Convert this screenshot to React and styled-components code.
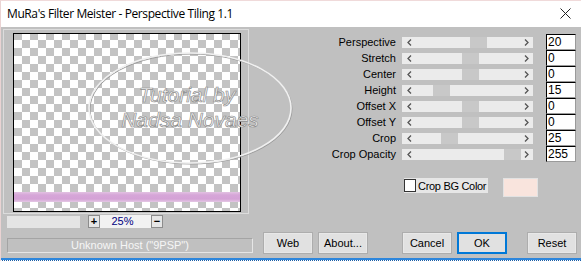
import React from 'react';
import styled, { createGlobalStyle } from 'styled-components';

const Global = createGlobalStyle`
  html, body { margin: 0; padding: 0; background: #c0c0c0; }
  body { font-family: "Liberation Sans", Arial, sans-serif; }
  * { box-sizing: border-box; }
`;

const Window = styled.div`
  width: 581px;
  height: 261px;
  display: flex;
  flex-direction: column;
  overflow: hidden;
  border-left: 1px solid #ead3d3;
  border-top: 1px solid #f0dada;
`;

const TitleBar = styled.div`
  height: 26px;
  flex: none;
  background: #ffffff;
  display: flex;
  align-items: center;
  padding-left: 6px;
  padding-right: 10px;
`;

const TitleText = styled.div`
  font-family: "Open Sans", "Noto Sans", sans-serif;
  font-size: 12px;
  color: #000;
  letter-spacing: -0.4px;
  margin-top: -1px;
`;

const CloseIcon = styled.svg`
  margin-left: auto;
  width: 11px;
  height: 11px;
  margin-top: -1px;
`;

const Body = styled.div`
  flex: 1;
  position: relative;
  background: #c0c0c0;
  display: flex;
  flex-direction: column;
`;

const TopRow = styled.div`
  display: flex;
  padding-top: 2px;
`;

const LeftCol = styled.div`
  margin-left: 2px;
  width: 246px;
  display: flex;
  flex-direction: column;
  flex: none;
`;

const Frame = styled.div`
  height: 185px;
  border: 1px solid #dcdcdc;
  padding: 3px 0 0 9px;
`;

const Preview = styled.div`
  position: relative;
  width: 228px;
  height: 179px;
  border: 1px solid #000;
  background-color: #ffffff;
  background-image:
    linear-gradient(45deg, #c3c3c3 25%, transparent 25%, transparent 75%, #c3c3c3 75%),
    linear-gradient(45deg, #c3c3c3 25%, transparent 25%, transparent 75%, #c3c3c3 75%);
  background-size: 16px 16px;
  background-position: 8px -2px, 0px 6px;
  overflow: hidden;
`;

const Band = styled.div`
  position: absolute;
  left: 0;
  right: 0;
  top: 158px;
  height: 10px;
  background: linear-gradient(#e2c2e2, #d6a6d8 30%, #d4a2d6 70%, #e4c8e4);
`;

const ZoomRow = styled.div`
  margin-top: 1px;
  height: 13px;
  display: flex;
  align-items: center;
  padding-left: 4px;
`;

const BlankBox = styled.div`
  width: 73px;
  height: 12px;
  background: #e4e4e4;
`;

const ZoomCtl = styled.div`
  margin-left: 8px;
  width: 75px;
  height: 13px;
  display: flex;
  align-items: center;
  background: #f2f2f2;
`;

const StepBtn = styled.div`
  width: 12px;
  height: 13px;
  border: 1px solid #8c8c8c;
  background: #e6e6e6;
  font-size: 11px;
  font-weight: bold;
  line-height: 10px;
  text-align: center;
  color: #000;
`;

const ZoomText = styled.div`
  flex: 1;
  text-align: center;
  font-size: 11px;
  color: #000080;
  line-height: 13px;
  padding-right: 6px;
`;

const RightCol = styled.div`
  flex: 1;
  padding-top: 5px;
  padding-right: 5px;
  display: flex;
  flex-direction: column;
  align-items: flex-end;
`;

const Params = styled.div`
  display: grid;
  grid-template-columns: auto 131px 37px;
  grid-auto-rows: 16px;
  column-gap: 6px;
  align-items: center;
`;

const Label = styled.div`
  text-align: right;
  font-size: 11px;
  color: #000;
  white-space: nowrap;
`;

const Track = styled.div`
  position: relative;
  height: 11px;
  background: #ebebeb;
  display: flex;
  align-items: center;
  justify-content: space-between;
  padding: 0 4px 0 5px;
`;

const Thumb = styled.div`
  position: absolute;
  top: 0;
  width: 17px;
  height: 11px;
  background: #c8c8c8;
`;

const Chevron = styled.svg`
  width: 5px;
  height: 7px;
  position: relative;
`;

const ValueBox = styled.div`
  margin-left: 7px;
  width: 30px;
  height: 16px;
  background: #fff;
  border-top: 1px solid #000;
  border-left: 1px solid #000;
  border-right: 1px solid #9a9a9a;
  border-bottom: 1px solid #9a9a9a;
  font-size: 12px;
  line-height: 14px;
  padding-left: 1px;
  color: #000;
`;

const CropRow = styled.div`
  width: 173px;
  margin-top: 16px;
  padding-left: 1px;
  display: flex;
  align-items: flex-start;
`;

const CheckLabel = styled.div`
  width: 84px;
  height: 15px;
  display: flex;
  align-items: center;
  background: #e6e6e6;
  white-space: nowrap;
  overflow: visible;
`;

const CheckBox = styled.div`
  flex: none;
  width: 12px;
  height: 13px;
  background: #fff;
  border: 1px solid #333;
`;

const CheckText = styled.span`
  margin-left: 2px;
  font-size: 11px;
  letter-spacing: -0.3px;
  color: #000;
`;

const Swatch = styled.div`
  margin-left: 15px;
  width: 35px;
  height: 19px;
  background: #f9e4dd;
  border: 1px solid #e2e2e2;
`;

const BottomRow = styled.div`
  display: flex;
  align-items: flex-start;
  padding-top: 4px;
`;

const Status = styled.div`
  margin-left: 6px;
  margin-top: 6px;
  width: 246px;
  height: 15px;
  border-top: 1px solid #a4a4a4;
  border-left: 1px solid #a4a4a4;
  border-right: 1px solid #e6e6e6;
  border-bottom: 1px solid #e6e6e6;
  color: #f6f6f6;
  font-size: 11px;
  line-height: 13px;
  text-align: center;
`;

const Button = styled.div`
  margin-left: ${p => p.gap}px;
  width: 50px;
  height: 22px;
  background: #e1e1e1;
  border: ${p => (p.primary ? '2px solid #0078d7' : '1px solid #adadad')};
  box-shadow: ${p => (p.primary ? 'none' : 'inset 0 0 0 1px #e8e8e8')};
  font-size: 11px;
  color: #000;
  display: flex;
  align-items: center;
  justify-content: center;
`;

const BottomEdge = styled.div`
  height: 3px;
  flex: none;
  background:
    repeating-linear-gradient(90deg, #ffffff 0 1px, #1c5fa8 1px 2px) 0 2px / 100% 1px no-repeat,
    linear-gradient(#2d86dc, #2d86dc);
`;

const Watermark = styled.svg`
  position: absolute;
  left: 85px;
  top: 23px;
  width: 210px;
  height: 118px;
  pointer-events: none;
`;

const params = [
  { label: 'Perspective', value: '20', pos: 68 },
  { label: 'Stretch', value: '0', pos: 60 },
  { label: 'Center', value: '0', pos: 60 },
  { label: 'Height', value: '15', pos: 31 },
  { label: 'Offset X', value: '0', pos: 60 },
  { label: 'Offset Y', value: '0', pos: 60 },
  { label: 'Crop', value: '25', pos: 39 },
  { label: 'Crop Opacity', value: '255', pos: 102 },
];

const Left = () => (
  <Chevron viewBox="0 0 5 7">
    <polyline points="4,0.5 1,3.5 4,6.5" fill="none" stroke="#555" strokeWidth="1.3" />
  </Chevron>
);
const Right = () => (
  <Chevron viewBox="0 0 5 7">
    <polyline points="1,0.5 4,3.5 1,6.5" fill="none" stroke="#555" strokeWidth="1.3" />
  </Chevron>
);

const wmText = {
  textAnchor: 'middle',
  fontFamily: 'Liberation Sans, Arial, sans-serif',
  fontSize: 21,
  fontStyle: 'italic',
  fill: '#f4f4f4',
  stroke: '#8e8e8e',
  strokeWidth: 0.7,
};

export default function App() {
  return (
    <>
      <Global />
      <Window>
        <TitleBar>
          <TitleText>MuRa's Filter Meister - Perspective Tiling 1.1</TitleText>
          <CloseIcon viewBox="0 0 11 11">
            <line x1="0.5" y1="0.5" x2="10.5" y2="10.5" stroke="#222" strokeWidth="1" />
            <line x1="10.5" y1="0.5" x2="0.5" y2="10.5" stroke="#222" strokeWidth="1" />
          </CloseIcon>
        </TitleBar>
        <Body>
          <TopRow>
            <LeftCol>
              <Frame>
                <Preview>
                  <Band />
                </Preview>
              </Frame>
              <ZoomRow>
                <BlankBox />
                <ZoomCtl>
                  <StepBtn>+</StepBtn>
                  <ZoomText>25%</ZoomText>
                  <StepBtn>−</StepBtn>
                </ZoomCtl>
              </ZoomRow>
            </LeftCol>
            <RightCol>
              <Params>
                {params.map(p => (
                  <React.Fragment key={p.label}>
                    <Label>{p.label}</Label>
                    <Track>
                      <Thumb style={{ left: p.pos }} />
                      <Left />
                      <Right />
                    </Track>
                    <ValueBox>{p.value}</ValueBox>
                  </React.Fragment>
                ))}
              </Params>
              <CropRow>
                <CheckLabel>
                  <CheckBox />
                  <CheckText>Crop BG Color</CheckText>
                </CheckLabel>
                <Swatch />
              </CropRow>
            </RightCol>
          </TopRow>
          <BottomRow>
            <Status>Unknown Host ("9PSP")</Status>
            <Button gap={10}>Web</Button>
            <Button gap={5}>About...</Button>
            <Button gap={34}>Cancel</Button>
            <Button gap={5} primary>OK</Button>
            <Button gap={20}>Reset</Button>
          </BottomRow>
          <Watermark viewBox="0 0 210 118">
            <ellipse cx="104" cy="58" rx="101" ry="55" fill="none" stroke="#9c9c9c" strokeWidth="1" transform="translate(1 1)" />
            <ellipse cx="104" cy="58" rx="101" ry="55" fill="none" stroke="#f0f0f0" strokeWidth="1.6" />
            <text x="101" y="52" {...wmText}>Tutorial by</text>
            <text x="104" y="77" {...wmText}>Nadsa Novaes</text>
          </Watermark>
        </Body>
        <BottomEdge />
      </Window>
    </>
  );
}
